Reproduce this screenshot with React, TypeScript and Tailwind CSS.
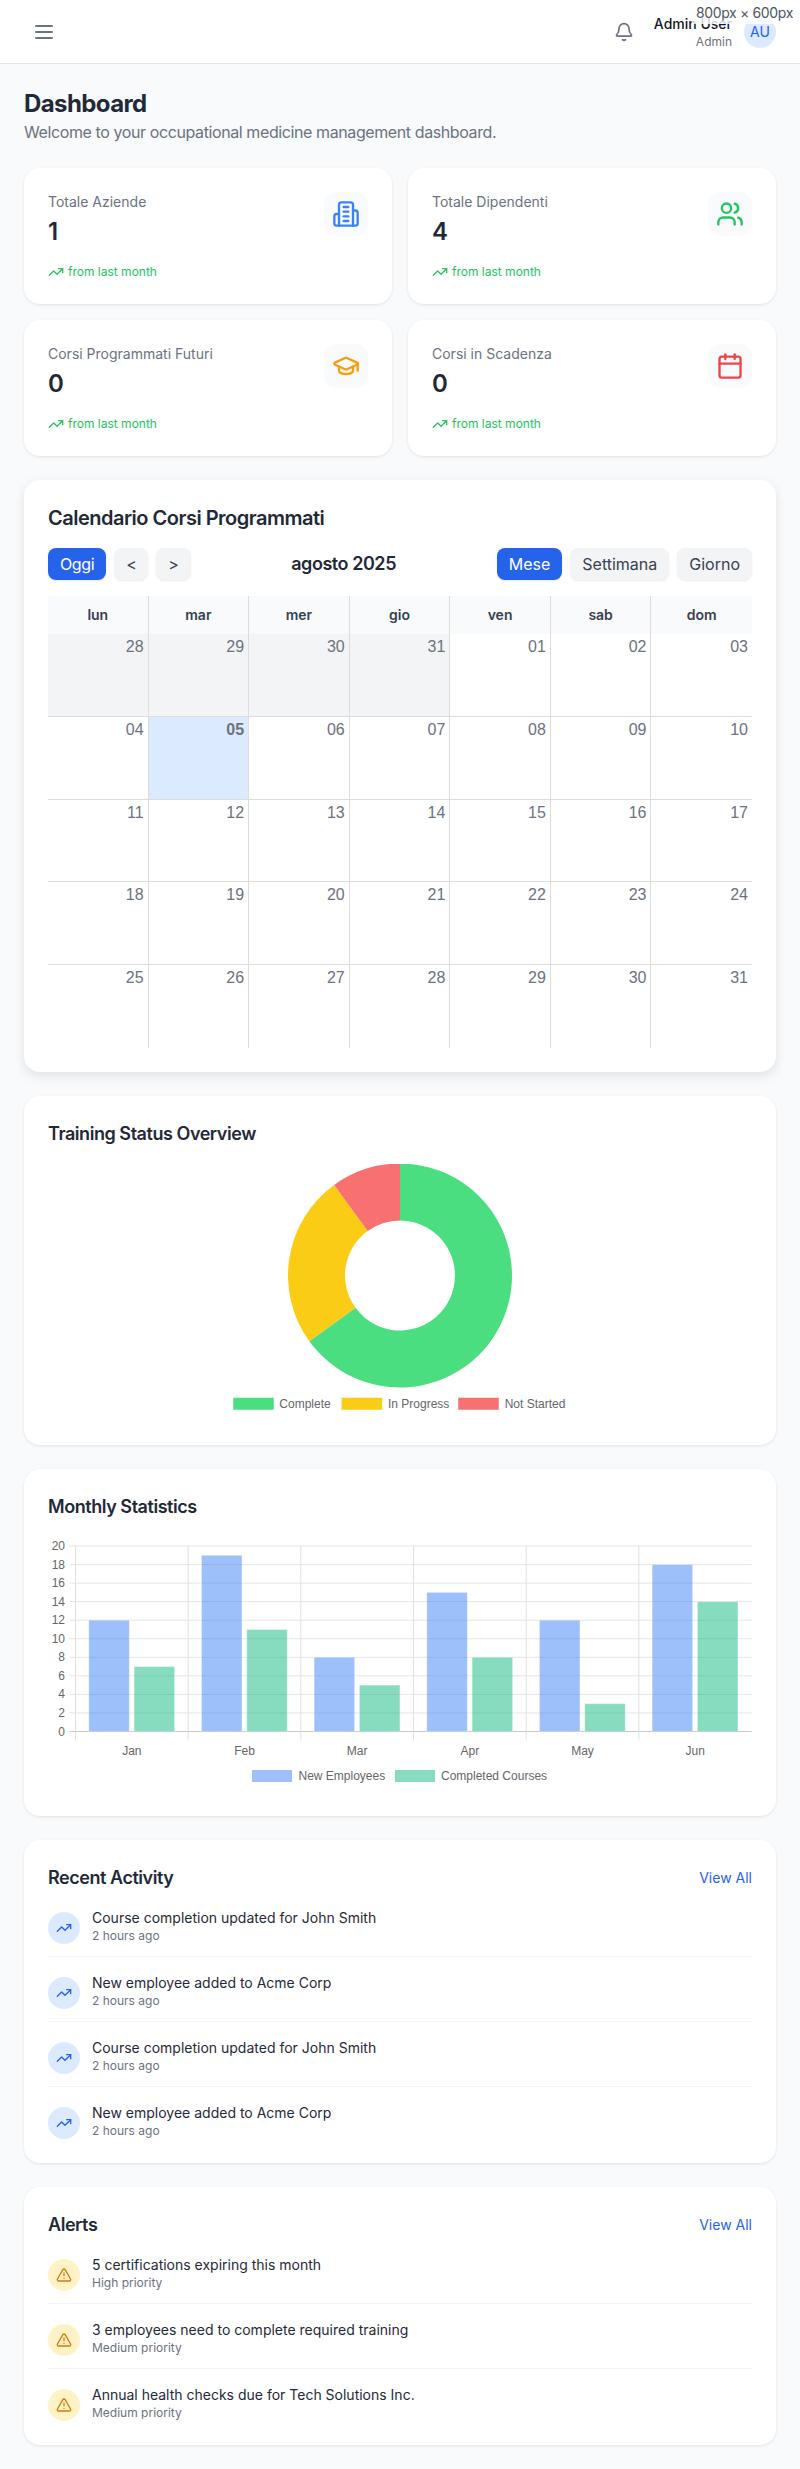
import React from "react";
import { Bell, Users, GraduationCap, Calendar, TrendingUp, TriangleAlert } from "lucide-react";

const Building = () => (
  <svg width="28" height="28" viewBox="0 0 24 24" fill="none" stroke="currentColor" strokeWidth="2" strokeLinecap="round" strokeLinejoin="round" className="text-[#3b82f6]">
    <path d="M6 22V4a2 2 0 0 1 2-2h8a2 2 0 0 1 2 2v18Z" />
    <path d="M6 12H4a2 2 0 0 0-2 2v6a2 2 0 0 0 2 2h2" />
    <path d="M18 9h2a2 2 0 0 1 2 2v9a2 2 0 0 1-2 2h-2" />
    <path d="M10 6h4" />
    <path d="M10 10h4" />
    <path d="M10 14h4" />
    <path d="M10 18h4" />
  </svg>
);

const MenuIcon = () => (
  <svg width="24" height="24" viewBox="0 0 24 24" fill="none" stroke="currentColor" strokeWidth="2" strokeLinecap="round" className="text-[#6b7280]">
    <path d="M4 6h16" />
    <path d="M4 12h16" />
    <path d="M4 18h16" />
  </svg>
);

const Stat = ({ title, value, icon }: { title: string; value: string; icon: React.ReactNode }) => (
  <div className="bg-white rounded-2xl shadow-[0_1px_3px_rgba(0,0,0,0.1)] p-6 h-[136px] flex justify-between">
    <div>
      <div className="text-sm leading-5 text-[#6b7280]">{title}</div>
      <div className="text-2xl leading-8 font-semibold text-[#1f2937] mt-1">{value}</div>
      <div className="flex items-center gap-1 text-xs leading-4 text-[#22c55e] mt-4">
        <TrendingUp size={16} strokeWidth={2} />
        <span>from last month</span>
      </div>
    </div>
    <div className="w-11 h-11 rounded-xl bg-[#f9fafb] flex items-center justify-center">{icon}</div>
  </div>
);

const weeks = [
  ["28", "29", "30", "31", "01", "02", "03"],
  ["04", "05", "06", "07", "08", "09", "10"],
  ["11", "12", "13", "14", "15", "16", "17"],
  ["18", "19", "20", "21", "22", "23", "24"],
  ["25", "26", "27", "28", "29", "30", "31"],
];
const days = ["lun", "mar", "mer", "gio", "ven", "sab", "dom"];

const Btn = ({ children, active, tight }: { children: React.ReactNode; active?: boolean; tight?: boolean }) => (
  <button className={`h-8 px-3 rounded-lg text-base leading-6 shadow-[0_1px_2px_rgba(0,0,0,0.08)] ${tight ? "tracking-tight" : ""} ${active ? "bg-[#2563eb] text-white" : "bg-[#f3f4f6] text-[#374151]"}`}>{children}</button>
);

const CalendarCard = () => (
  <div className="bg-white rounded-2xl shadow-[0_4px_12px_rgba(0,0,0,0.1)] p-6 h-[592px]">
    <h2 className="text-xl leading-7 font-semibold tracking-tight text-[#1f2937] mb-4">Calendario Corsi Programmati</h2>
    <div className="flex items-center justify-between h-8 mb-4">
      <div className="flex gap-2">
        <Btn active tight>Oggi</Btn>
        <Btn tight>&lt;</Btn>
        <Btn tight>&gt;</Btn>
      </div>
      <div className="text-lg leading-7 font-semibold tracking-tight text-[#1f2937]">agosto 2025</div>
      <div className="flex gap-2">
        <Btn active>Mese</Btn>
        <Btn>Settimana</Btn>
        <Btn>Giorno</Btn>
      </div>
    </div>
    <div className="grid grid-cols-7 bg-[#f9fafb]">
      {days.map((d, i) => (
        <div key={d} className={`h-[38px] flex items-center justify-center text-sm font-semibold text-[#374151] ${i < 6 ? "border-r border-[#ddd]" : ""}`}>{d}</div>
      ))}
    </div>
    {weeks.map((w, wi) => (
      <div key={wi} className="grid grid-cols-7 border-b border-[#ddd] last:border-b-0 h-[82.8px]">
        {w.map((d, i) => {
          const other = wi === 0 && i < 4;
          const today = wi === 1 && i === 1;
          return (
            <div key={i} className={`text-right pr-1 pt-[1px] text-base leading-6 font-['Liberation_Sans',sans-serif] text-[#6b7280] ${i < 6 ? "border-r border-[#ddd]" : ""} ${other ? "bg-[#f3f4f6]" : today ? "bg-[#dbeafe] font-bold" : ""}`}>{d}</div>
          );
        })}
      </div>
    ))}
  </div>
);

const chartFont = "'Liberation Sans', Arial, sans-serif";

const Donut = () => {
  const cx = 352, cy = 111.5, R = 112, r = 55;
  const pt = (rad: number, deg: number) => {
    const a = ((deg - 90) * Math.PI) / 180;
    return `${cx + rad * Math.cos(a)} ${cy + rad * Math.sin(a)}`;
  };
  const seg = (s: number, e: number, c: string) => {
    const large = e - s > 180 ? 1 : 0;
    return <path d={`M${pt(R, s)} A${R} ${R} 0 ${large} 1 ${pt(R, e)} L${pt(r, e)} A${r} ${r} 0 ${large} 0 ${pt(r, s)} Z`} fill={c} />;
  };
  const legend: [number, number, string, string][] = [
    [185, 231.3, "Complete", "#4ade80"],
    [293.3, 340, "In Progress", "#facc15"],
    [410, 456.7, "Not Started", "#f87171"],
  ];
  return (
    <svg width="704" height="257" viewBox="0 0 704 257" className="block" fontFamily={chartFont} fontSize="12" fill="#666">
      {seg(0, 234, "#4ade80")}
      {seg(234, 324, "#facc15")}
      {seg(324, 360, "#f87171")}
      {legend.map(([bx, tx, l, c]) => (
        <g key={l}>
          <rect x={bx} y={233.5} width={41} height={12.5} fill={c} stroke="rgba(255,255,255,0.5)" />
          <text x={tx} y={243.8}>{l}</text>
        </g>
      ))}
    </svg>
  );
};

const BarChart = () => {
  const data: [string, number, number][] = [["Jan", 12, 7], ["Feb", 19, 11], ["Mar", 8, 5], ["Apr", 15, 8], ["May", 12, 3], ["Jun", 18, 14]];
  const x0 = 27.5, top = 9, base = 194.5, right = 703.5, step = (right - x0) / 6;
  const unit = (base - top) / 20;
  const blue = "rgba(59,130,246,0.5)";
  const green = "rgba(16,185,129,0.5)";
  const edge = "rgba(255,255,255,0.35)";
  return (
    <svg width="704" height="255" viewBox="0 0 704 255" className="block" fontFamily={chartFont} fontSize="12" fill="#666">
      {Array.from({ length: 11 }, (_, i) => {
        const y = top + i * 2 * unit;
        return (
          <g key={i}>
            <line x1={x0 - 6} x2={right} y1={y} y2={y} stroke={i === 10 ? "#c9c9c9" : "#e5e5e5"} />
            <text x={17} y={y + 4} textAnchor="end">{20 - i * 2}</text>
          </g>
        );
      })}
      {Array.from({ length: 6 }, (_, i) => (
        <line key={i} x1={x0 + i * step} x2={x0 + i * step} y1={top} y2={base + 8} stroke="#e0e0e0" />
      ))}
      {data.map(([m, a, b], i) => {
        const cell = x0 + i * step;
        return (
          <g key={m}>
            <rect x={cell + 13.3} y={base - a * unit} width={40.5} height={a * unit} fill={blue} stroke={edge} />
            <rect x={cell + 58.6} y={base - b * unit} width={40.5} height={b * unit} fill={green} stroke={edge} />
            <text x={cell + step / 2} y={base + 23} textAnchor="middle">{m}</text>
          </g>
        );
      })}
      <rect x={204} y={233} width={40} height={12} fill={blue} />
      <text x={250.5} y={243}>New Employees</text>
      <rect x={347} y={233} width={40} height={12} fill={green} />
      <text x={393} y={243}>Completed Courses</text>
    </svg>
  );
};

const ListCard = ({ title, children }: { title: string; children: React.ReactNode }) => (
  <div className="bg-white rounded-2xl shadow-[0_1px_3px_rgba(0,0,0,0.1)] p-6">
    <div className="flex items-center justify-between h-7">
      <h3 className="text-lg leading-7 font-semibold tracking-tight text-[#1f2937]">{title}</h3>
      <a className="text-sm leading-5 text-[#2563eb]">View All</a>
    </div>
    <div>{children}</div>
  </div>
);

const Row = ({ title, sub, icon, bg, last }: { title: string; sub: string; icon: React.ReactNode; bg: string; last?: boolean }) => (
  <div className={`flex items-end gap-3 pt-4 ${last ? "" : "pb-3 border-b border-[#f3f4f6]"}`}>
    <div className={`w-8 h-8 rounded-full flex items-center justify-center shrink-0 ${bg}`}>{icon}</div>
    <div>
      <div className="text-sm leading-5 text-[#1f2937]">{title}</div>
      <div className="text-xs leading-4 text-[#6b7280]">{sub}</div>
    </div>
  </div>
);

export default function App() {
  const up = <TrendingUp size={16} className="text-[#2563eb]" />;
  const warn = <TriangleAlert size={16} className="text-[#d97706]" />;
  return (
    <div className="min-h-[2469px] bg-[#f9fafb] font-['Inter',sans-serif] relative">
      <header className="h-16 bg-white border-b border-[#e5e7eb] flex items-center justify-between pl-8 pr-6">
        <MenuIcon />
        <div className="flex items-center">
          <Bell size={20} className="text-[#6b7280] mr-5" />
          <div className="text-right mr-3">
            <div className="text-sm leading-5 font-medium text-[#111827]">Admin User</div>
            <div className="text-xs leading-4 text-[#6b7280]">Admin</div>
          </div>
          <div className="w-8 h-8 rounded-full bg-[#dbeafe] text-[#2563eb] text-sm flex items-center justify-center">AU</div>
        </div>
      </header>
      <div className="absolute top-0 right-0 h-6 pt-[3px] pl-1 pr-[7px] text-sm leading-5 tracking-tight text-[#4b5563] bg-white/80">800px × 600px</div>
      <main className="px-6 pt-6 pb-6">
        <h1 className="text-2xl leading-8 font-bold tracking-tight text-[#1f2937]">Dashboard</h1>
        <p className="text-base leading-6 tracking-tight text-[#6b7280] mb-6">Welcome to your occupational medicine management dashboard.</p>
        <div className="grid grid-cols-2 gap-4 mb-6">
          <Stat title="Totale Aziende" value="1" icon={<Building />} />
          <Stat title="Totale Dipendenti" value="4" icon={<Users size={28} className="text-[#22c55e]" />} />
          <Stat title="Corsi Programmati Futuri" value="0" icon={<GraduationCap size={28} className="text-[#f59e0b]" />} />
          <Stat title="Corsi in Scadenza" value="0" icon={<Calendar size={28} className="text-[#ef4444]" />} />
        </div>
        <CalendarCard />
        <div className="bg-white rounded-2xl shadow-[0_1px_3px_rgba(0,0,0,0.1)] p-6 mt-6">
          <h3 className="text-lg leading-7 font-semibold tracking-tight text-[#1f2937] mb-4">Training Status Overview</h3>
          <Donut />
        </div>
        <div className="bg-white rounded-2xl shadow-[0_1px_3px_rgba(0,0,0,0.1)] p-6 mt-6">
          <h3 className="text-lg leading-7 font-semibold tracking-tight text-[#1f2937] mb-4">Monthly Statistics</h3>
          <BarChart />
        </div>
        <div className="mt-6">
          <ListCard title="Recent Activity">
            <Row title="Course completion updated for John Smith" sub="2 hours ago" icon={up} bg="bg-[#dbeafe]" />
            <Row title="New employee added to Acme Corp" sub="2 hours ago" icon={up} bg="bg-[#dbeafe]" />
            <Row title="Course completion updated for John Smith" sub="2 hours ago" icon={up} bg="bg-[#dbeafe]" />
            <Row title="New employee added to Acme Corp" sub="2 hours ago" icon={up} bg="bg-[#dbeafe]" last />
          </ListCard>
        </div>
        <div className="mt-6">
          <ListCard title="Alerts">
            <Row title="5 certifications expiring this month" sub="High priority" icon={warn} bg="bg-[#fef3c7]" />
            <Row title="3 employees need to complete required training" sub="Medium priority" icon={warn} bg="bg-[#fef3c7]" />
            <Row title="Annual health checks due for Tech Solutions Inc." sub="Medium priority" icon={warn} bg="bg-[#fef3c7]" last />
          </ListCard>
        </div>
      </main>
    </div>
  );
}
